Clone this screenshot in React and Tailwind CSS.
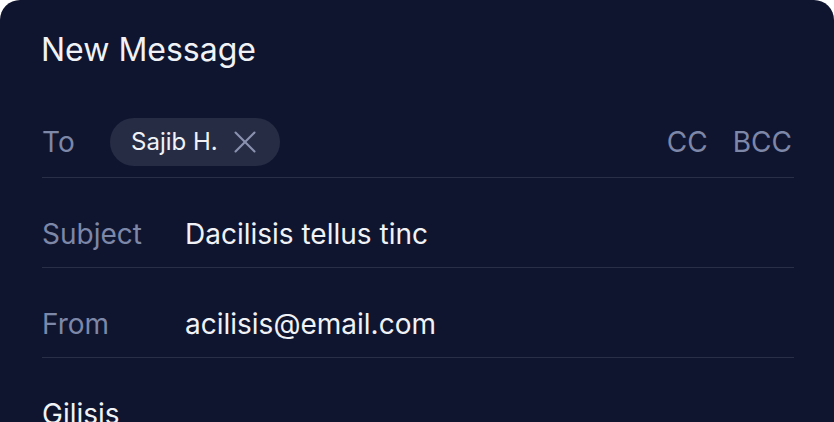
import React from 'react'
import { X } from 'lucide-react'

const font = { fontFamily: 'Inter, "Noto Sans", sans-serif' }

function Row({ label, children }) {
  return (
    <div className="flex items-center border-b-[1.5px] border-[#2a2f48] pt-8 pb-[9px]">
      <span className="w-[143px] shrink-0 text-[28px] text-[#7d87a8]">{label}</span>
      <div className="flex h-12 flex-1 items-center">{children}</div>
    </div>
  )
}

export default function App() {
  return (
    <div className="min-h-screen bg-white" style={font}>
      <div className="min-h-[422px] rounded-t-[20px] bg-[#10152f] pl-[42px] pr-[40px] pt-8 text-[#f1f2f6]">
        <h1 className="-ml-px text-[32px] font-normal leading-9">New Message</h1>

        <div className="mt-[18px]">
          <div className="flex items-center border-b-[1.5px] border-[#2a2f48] pt-8 pb-[11px]">
            <span className="w-[68px] shrink-0 text-[28px] text-[#7d87a8]">To</span>
            <div className="flex h-12 items-center gap-2 rounded-full bg-[#272c45] pl-[21px] pr-[16px]">
              <span className="text-[24px]">Sajib H.</span>
              <X className="h-[38px] w-[38px] text-[#8a92b0]" strokeWidth={1.3} />
            </div>
            <div className="ml-auto flex gap-[25px] pr-[2px] text-[28px] text-[#7d87a8]">
              <span>CC</span>
              <span>BCC</span>
            </div>
          </div>

          <Row label="Subject">
            <span className="text-[28px]">Dacilisis tellus tinc</span>
          </Row>
          <Row label="From">
            <span className="text-[28px]">acilisis@email.com</span>
          </Row>

          <p className="pt-[37px] text-[28px] leading-[39px]">Gilisis</p>
        </div>
      </div>
    </div>
  )
}
